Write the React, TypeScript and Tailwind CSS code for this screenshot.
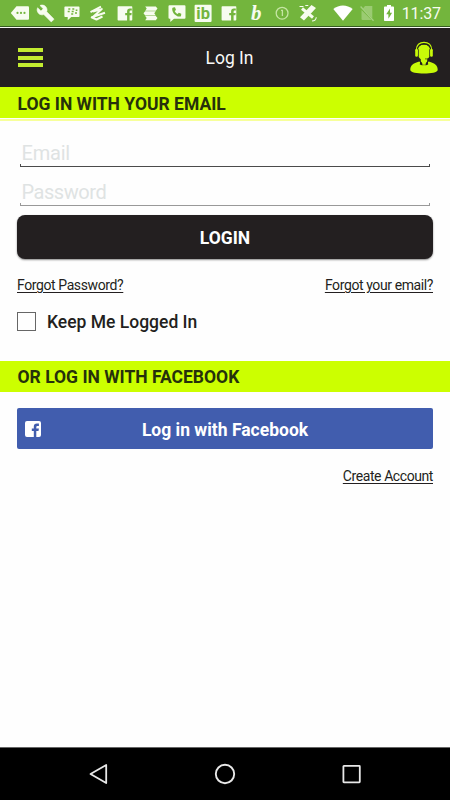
import React, { ReactNode } from 'react';

function Slot({ children }: { children: ReactNode }) {
  return (
    <svg viewBox="0 0 26.2 26" className="h-[26px] w-[26.2px] shrink-0" fill="#f7fcef">
      {children}
    </svg>
  );
}

function FacebookTile() {
  return (
    <Slot>
      <path d="M6.300 6.200h13.300a.7.7 0 0 1 .7.700v12.800a.7.7 0 0 1-.7.700h-2v-5.200h1.800l.3-2.200h-2.100v-1.300c0-.7.300-1.100 1.100-1.100h1.100V8.500h-1.800c-1.900 0-2.900 1.100-2.900 2.800V13h-1.900v2.200h1.900v5.200H6.300a.7.7 0 0 1-.7-.7V6.900a.7.7 0 0 1 .7-.7z" />
    </Slot>
  );
}

function StatusBar() {
  return (
    <div className="flex h-[26px] bg-[#73b53d] pl-[6.900px]">
      <Slot>
        <path d="M9.500 6.200H21a1 1 0 0 1 1 1v11.600a1 1 0 0 1-1 1H9.500L3.800 13z" />
        <g fill="#73b53d">
          <circle cx="10.500" cy="12.900" r="1.100" />
          <circle cx="14" cy="12.900" r="1.100" />
          <circle cx="17.500" cy="12.900" r="1.100" />
        </g>
      </Slot>
      <Slot>
        <g transform="translate(3.400 4.200) scale(.76)">
          <path stroke="#f7fcef" strokeWidth=".8" d="M22.700 19l-9.100-9.100c.9-2.300.4-5-1.500-6.900-2-2-5-2.400-7.400-1.300L9 6 6 9 1.600 4.700C.4 7.100.9 10.100 2.900 12.100c1.900 1.900 4.600 2.400 6.900 1.500l9.100 9.100c.4.4 1 .4 1.400 0l2.300-2.300c.5-.4.5-1.100.1-1.400z" />
        </g>
      </Slot>
      <Slot>
        <path d="M6.200 6.400h13.500a.8.8 0 0 1 .8.8v9a.8.8 0 0 1-.8.8h-7.400l-3.600 3.300V17H6.200a.8.8 0 0 1-.8-.8v-9a.8.8 0 0 1 .8-.8z" />
        <path d="M9.300 8.900h2m2 0h2M8.700 11.600h2m2 0h2m2-1.300h1.700m-6.200 3.700h2m1.800-1h2" stroke="#73b53d" strokeWidth="1.500" />
      </Slot>
      <Slot>
        <path d="M5.500 12.200 16 6.700M8 11.600l8.800-2.500-8.600 7.600 11.800-4M6 17l5.500 2.500 6-3" fill="none" stroke="#f7fcef" strokeWidth="2" strokeLinejoin="round" />
      </Slot>
      <FacebookTile />
      <Slot>
        <path d="M7.200 6.500h10.600l1.700 2.100-1.700 2.100H7.200l1.500-2.100zM7.200 11.200h10.600l-1.500 2.100 1.500 2.100H7.200l-1.700-2.100zM7.200 16h10.600l1.700 2-1.700 2.200H7.200L8.700 18z" />
      </Slot>
      <Slot>
        <path d="M5.500 5.200h15a1 1 0 0 1 1 1v11.600a1 1 0 0 1-1 1H10l-3.700 3.100v-3.100h-.8a1 1 0 0 1-1-1V6.200a1 1 0 0 1 1-1z" />
        <path d="M9.200 7.500 11 7.300l1 2.600-1.300 1.100c.7 1.500 1.500 2.300 2.900 3l1.200-1.300 2.500 1-.2 1.800c-.2 1-.8 1.200-1.900 1.100-3.600-.5-6.700-3.700-7-7.200 0-1.100.2-1.700 1-1.900z" fill="#73b53d" />
      </Slot>
      <Slot>
        <rect x="4.600" y="4.700" width="17" height="17.300" rx="1" />
        <text x="13.100" y="19" textAnchor="middle" fontSize="16.500" className="font-['Roboto',sans-serif] font-bold" fill="#73b53d">ib</text>
      </Slot>
      <FacebookTile />
      <Slot>
        <text x="13.300" y="20.500" textAnchor="middle" fontSize="21" className="font-['Liberation_Serif',serif] font-bold italic">b</text>
      </Slot>
      <Slot>
        <g fill="none" stroke="#c5e5a3" strokeWidth="1.300">
          <circle cx="13.100" cy="13.200" r="5.900" />
          <path d="M12 10.300h1.400V16" />
        </g>
      </Slot>
      <Slot>
        <path d="m16.500 5 4.500 3-5.500 6-4.500-3.200zM9.800 12.300l4 3.200L9 20.500 5 17.300z" />
        <path d="m7 8.500 11 9" stroke="#f7fcef" strokeWidth="3" />
        <path d="M17 21c2.500 0 4-1.500 4.300-3.800M4.500 6.500h4m1.800-1h3" fill="none" stroke="#f7fcef" strokeWidth="1.100" />
      </Slot>
      <div className="flex w-[129px] items-start pl-[12px]">
        <svg viewBox="0 0 20 26" className="h-[26px] w-5 shrink-0" fill="#fff">
          <path d="M.3 9C5.800 4.300 14.100 4.300 19.700 9L10 20.700z" />
        </svg>
        <svg viewBox="0 0 14 26" className="ml-[7px] h-[26px] w-[14px] shrink-0">
          <path d="M5 6h7.300v12.300L3 8.500zM1.500 10l10 10H2.500a1 1 0 0 1-1-1z" fill="#9bcb72" />
          <path d="M.6 6.500 13.500 20.800" stroke="#a5d180" strokeWidth="1.300" />
        </svg>
        <svg viewBox="0 0 12 26" className="ml-[8.500px] h-[26px] w-3 shrink-0">
          <path d="M4 5h4v1.600h2.200a.8.8 0 0 1 .8.800v12.800a.8.8 0 0 1-.8.800H1.800a.8.8 0 0 1-.8-.8V7.400a.8.8 0 0 1 .8-.8H4z" fill="#fff" />
          <path d="M7 8.500 3.200 14.300h2.200v4.400l3.700-6H7z" fill="#73b53d" />
        </svg>
        <span className="ml-[7px] mt-[4px] text-[16px] leading-[20px] tracking-[-0.100px] text-[#f8fcef]">11:37</span>
      </div>
    </div>
  );
}

function Header() {
  return (
    <header className="flex h-[59px] items-center justify-between bg-[#231f20] pl-[18px] pr-[12px]">
      <div className="flex w-[31px] flex-col gap-[3.500px]">
        <i className="h-[4px] w-[25px] bg-[#c3ec30]" />
        <i className="h-[4px] w-[25px] bg-[#c3ec30]" />
        <i className="h-[4px] w-[25px] bg-[#c3ec30]" />
      </div>
      <h1 className="text-[17.500px] leading-6 text-[#f8f8f8]">Log In</h1>
      <svg viewBox="0 0 28 34" className="h-[34px] w-7" fill="#c8fa08">
        <path d="M14 3.500c4.200 0 6.600 2.700 6.600 7 0 3.700-1.500 6.500-3.400 7.700v3.100l-3.200 3-3.200-3v-3.100c-1.900-1.200-3.400-4-3.400-7.700 0-4.300 2.400-7 6.600-7z" />
        <path d="M.3 29c0-4.800 2.500-6.500 9-8.500l4.700 4 4.700-4c6.500 2 9 3.700 9 8.500C27.700 33.800.3 33.800.3 29z" />
        <path d="M6.300 9C6.300 3.900 9.600 1.300 14 1.300S21.700 3.900 21.700 9" fill="none" stroke="#c8fa08" strokeWidth="1.200" />
        <path d="M7.400 8.500C8 4.900 10.500 3.200 14 3.200s6 1.700 6.600 5.300" fill="none" stroke="#231f20" strokeWidth=".9" />
        <rect x="5.200" y="8" width="2.700" height="7.800" rx="1.200" />
        <rect x="20.100" y="8" width="2.700" height="7.800" rx="1.200" />
        <path d="M8.500 8.200v7.400m11-7.400v7.400M20 16c-1 1.600-2.500 2.100-5 1.900" fill="none" stroke="#231f20" strokeWidth=".7" />
        <path d="M10.200 20 9.800 23.500l2.800 1-.8-3zm7.600 0 .4 3.500-2.800 1 .8-3z" fill="#231f20" />
      </svg>
    </header>
  );
}

function Field({ label, line, text }: { label: string; line: string; text: string }) {
  return (
    <div className={'relative mx-[20px] flex h-[39px] items-end border-b pl-[1.500px] ' + line}>
      <span className={'-mb-[1px] text-[20px] leading-[27px] text-[#dfe3e3] ' + text}>{label}</span>
      <i className={'absolute bottom-0 left-0 h-[2px] w-px border-l ' + line} />
      <i className={'absolute bottom-0 right-0 h-[2px] w-px border-l ' + line} />
    </div>
  );
}

export default function App() {
  return (
    <div className="flex h-[800px] w-[450px] flex-col overflow-hidden bg-[#fefefe] font-['Roboto',sans-serif] text-[#231f20]">
      <StatusBar />
      <div className="h-px bg-[#365c21]" />
      <div className="h-px bg-[#f6f9f2]" />
      <Header />
      <h2 className="h-[31px] bg-[#ccff00] pl-[17.500px] text-[17.500px] font-bold leading-[34px] text-[#26310b]">
        LOG IN WITH YOUR EMAIL
      </h2>
      <div className="mt-px h-[2px] bg-[#f7ff9a]" />

      <main className="flex flex-1 flex-col">
        <div className="mt-[7px]">
          <Field label="Email" line="border-[#4b4b4b]" text="tracking-[-0.200px]" />
          <Field label="Password" line="border-[#999]" text="tracking-[-0.450px]" />
        </div>
        <button className="mx-[17px] mt-[9px] h-[44px] rounded-[8px] bg-[#231f20] pt-[2px] text-[17.500px] font-bold text-white shadow-[0_1px_2px_#888]">
          LOGIN
        </button>
        <div className="mx-[17px] mt-[16px] flex justify-between text-[14px] leading-[20px] tracking-[-0.400px] underline underline-offset-2">
          <a>Forgot Password?</a>
          <a>Forgot your email?</a>
        </div>
        <label className="ml-[17px] mt-[15px] flex h-[22px] items-center">
          <span className="h-[19px] w-[19px] border border-[#666]" />
          <span className="ml-[11px] mt-[2px] text-[17.500px] font-medium leading-[22px]">Keep Me Logged In</span>
        </label>
        <h2 className="mt-[29px] h-[31px] bg-[#ccff00] pl-[17.500px] text-[17.500px] font-bold leading-[33px] text-[#26310b]">
          OR LOG IN WITH FACEBOOK
        </h2>
        <button className="mx-[17px] mt-[16px] flex h-[41px] items-center rounded-[2px] bg-[#415dae] pl-[8px] pr-[24px] text-white">
          <svg viewBox="0 0 16 16" className="h-4 w-4 shrink-0" fill="#fff">
            <path d="M2 0h12a2 2 0 0 1 2 2v12a2 2 0 0 1-2 2h-2.700v-6h2.200l.4-2.400h-2.600V6.200c0-.8.400-1.300 1.300-1.300h1.300V2.600h-2c-2 0-3.100 1.200-3.100 3.100v1.900h-2V10h2v6H2a2 2 0 0 1-2-2V2a2 2 0 0 1 2-2z" />
          </svg>
          <span className="flex-1 pt-[3px] text-center text-[17.500px] font-bold">Log in with Facebook</span>
        </button>
        <a className="mr-[17px] mt-[17px] self-end text-[14px] leading-[20px] tracking-[-0.420px] underline underline-offset-2">Create Account</a>
      </main>

      <nav className="flex h-[53px] items-center justify-between border-t border-[#666] bg-black pl-[88px] pr-[88px]">
        <svg viewBox="0 0 20 22" className="h-[22px] w-5" fill="none" stroke="#e8e8e8" strokeWidth="1.800">
          <path d="M18.200 2v18L2.500 11z" strokeLinejoin="round" />
        </svg>
        <svg viewBox="0 0 22 22" className="h-[22px] w-[22px]" fill="none" stroke="#e8e8e8" strokeWidth="1.900">
          <circle cx="11" cy="11" r="9.200" />
        </svg>
        <svg viewBox="0 0 20 22" className="h-[22px] w-5" fill="none" stroke="#e8e8e8" strokeWidth="1.800">
          <rect x="1.400" y="2.900" width="16.400" height="16.400" rx=".5" />
        </svg>
      </nav>
    </div>
  );
}
